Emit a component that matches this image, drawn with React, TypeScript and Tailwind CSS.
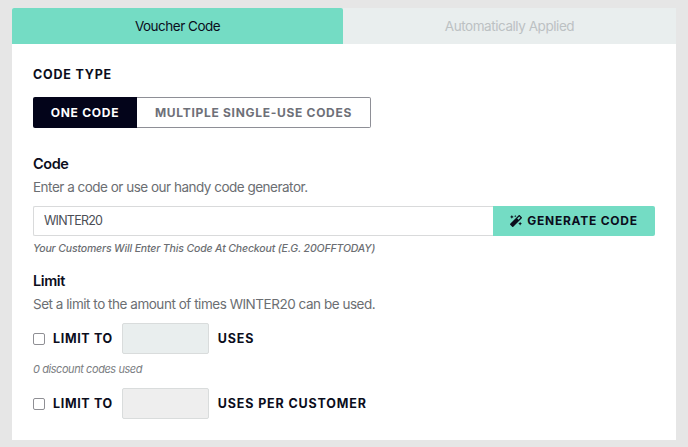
import React from 'react';
import { FaMagic } from 'react-icons/fa';

const font = "font-['Inter','Liberation_Sans',sans-serif]";

const LimitRow = ({ after, box }: { after: string; box: string }) => (
  <div className="flex items-center h-[31px]">
    <span className="w-[10px] h-[10px] box-content border border-[#8f8f94] rounded-[2px] bg-white" />
    <span className="ml-[8px] pt-[1px] text-[12.5px] font-bold tracking-[0.65px] text-[#0b0d1c]">LIMIT TO</span>
    <div className={`ml-[9px] w-[87px] h-[31px] border border-[#d9dcdc] rounded-[2px] ${box}`} />
    <span className="ml-[9px] pt-[1px] text-[12.5px] font-bold tracking-[0.85px] text-[#0b0d1c]">{after}</span>
  </div>
);

export default function App() {
  return (
    <div className={`${font} w-[688px] h-[447px] bg-[#e6e6e6] pt-[8px] px-[12px] overflow-hidden`}>
      <div className="w-[664px] h-[432px] bg-white">
        <div className="flex h-[36px] bg-[#e9eeee]">
          <div className="w-[331px] flex items-center justify-center bg-[#74dcc4] rounded-t-[2px] text-[13.5px] tracking-[-0.5px] text-[#0b0d1c]">
            Voucher Code
          </div>
          <div className="flex-1 flex items-center justify-center text-[13.5px] tracking-[-0.45px] text-[#bcc1c3]">
            Automatically Applied
          </div>
        </div>

        <div className="px-[21px] pt-[23px]">
          <h2 className="text-[12.5px] leading-[16px] font-bold tracking-[0.8px] text-[#0b0d1c]">CODE TYPE</h2>
          <div className="mt-[14px] flex h-[31px] w-[338px]">
            <div className="w-[104px] flex items-center justify-center bg-[#03041a] rounded-l-[2px] text-[12px] font-bold tracking-[0.75px] text-white">
              ONE CODE
            </div>
            <div className="flex-1 flex items-center justify-center border border-l-0 border-[#8e8f96] rounded-r-[2px] text-[12px] font-bold tracking-[0.7px] text-[#6e7078]">
              MULTIPLE SINGLE-USE CODES
            </div>
          </div>

          <h3 className="mt-[26px] text-[14.5px] leading-[20px] font-semibold tracking-[-0.4px] text-[#0b0d1c]">Code</h3>
          <p className="mt-[3px] text-[13.5px] leading-[20px] tracking-[-0.5px] text-[#6b6e72]">
            Enter a code or use our handy code generator.
          </p>
          <div className="mt-[9px] flex h-[30px] w-[622px]">
            <div className="flex-1 flex items-center pl-[10px] pt-[1px] border border-r-0 border-[#d9dadb] rounded-l-[2px] text-[12.5px] tracking-[-0.75px] text-[#4b4e55]">
              WINTER20
            </div>
            <div className="w-[162px] flex items-center justify-center gap-[5px] bg-[#74dcc4] rounded-r-[2px] text-[12px] font-bold tracking-[0.75px] text-[#0b0d1c]">
              <FaMagic className="w-[12px] h-[12px]" />
              GENERATE CODE
            </div>
          </div>
          <p className="mt-[5px] text-[10.5px] leading-[16px] font-medium italic tracking-[-0.15px] text-[#6b6e72]">
            Your Customers Will Enter This Code At Checkout (E.G. 20OFFTODAY)
          </p>

          <h3 className="mt-[14px] text-[14.5px] leading-[20px] font-semibold tracking-[-0.4px] text-[#0b0d1c]">Limit</h3>
          <p className="mt-[3px] text-[13.5px] leading-[20px] tracking-[-0.47px] text-[#6b6e72]">
            Set a limit to the amount of times WINTER20 can be used.
          </p>
          <div className="mt-[9px]">
            <LimitRow after="USES" box="bg-[#e9eeee]" />
          </div>
          <p className="mt-[7px] text-[11px] leading-[16px] italic tracking-[-0.43px] text-[#7b7e82]">0 discount codes used</p>
          <div className="mt-[11px]">
            <LimitRow after="USES PER CUSTOMER" box="bg-[#eeeeee]" />
          </div>
        </div>
      </div>
    </div>
  );
}
